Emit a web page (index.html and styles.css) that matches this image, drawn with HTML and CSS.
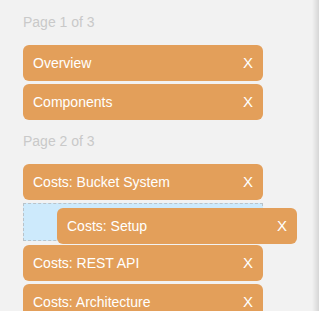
FILE: index.html
```html
<!DOCTYPE html>
<html lang="en">
<head>
  <meta charset="UTF-8" />
  <title>Pages</title>
  <link rel="stylesheet" href="styles.css">
</head>
<body>
  <div class="panel">
    <div class="page-label">Page 1 of 3</div>
    <ul class="page-list">
      <li class="item"><span>Overview</span><span class="close">X</span></li>
      <li class="item"><span>Components</span><span class="close">X</span></li>
    </ul>

    <div class="page-label">Page 2 of 3</div>
    <ul class="page-list">
      <li class="item"><span>Costs: Bucket System</span><span class="close">X</span></li>
      <li class="placeholder"></li>
      <li class="item"><span>Costs: REST API</span><span class="close">X</span></li>
      <li class="item"><span>Costs: Architecture</span><span class="close">X</span></li>
    </ul>

    <!-- item being dragged -->
    <div class="item dragging"><span>Costs: Setup</span><span class="close">X</span></div>
  </div>
</body>
</html>
```

FILE: styles.css
```css
html, body {
  margin: 0;
  height: 100%;
  background: #fff;
  font-family: 'Liberation Sans', Arial, sans-serif;
  overflow: hidden;
}

.panel {
  position: relative;
  width: 319px;
  height: 100%;
  box-sizing: border-box;
  padding: 14px 0 0 23px;
  background: linear-gradient(to right, #f2f2f2 0, #f2f2f2 312px, #e6e6e6 315px, #d6d6d6 319px);
}

.page-label {
  font-size: 14px;
  line-height: 16px;
  color: #c9c9c9;
  margin-bottom: 15px;
}

.page-list {
  list-style: none;
  margin: 0;
  padding: 0 0 10px 0;
}

.item {
  display: flex;
  justify-content: space-between;
  width: 240px;
  height: 36px;
  box-sizing: border-box;
  padding: 0 10px;
  margin-bottom: 3px;
  border-radius: 6px;
  background-color: #e39f5a;
  color: #fff;
  font-size: 14px;
  line-height: 36px;
}

.close {
  font-size: 15px;
}

.placeholder {
  width: 240px;
  height: 38px;
  box-sizing: border-box;
  margin-bottom: 4px;
  border: 1px dashed #b9c3ca;
  background-color: #cdeafc;
}

.dragging {
  position: absolute;
  left: 57px;
  top: 208px;
  margin: 0;
}
```
